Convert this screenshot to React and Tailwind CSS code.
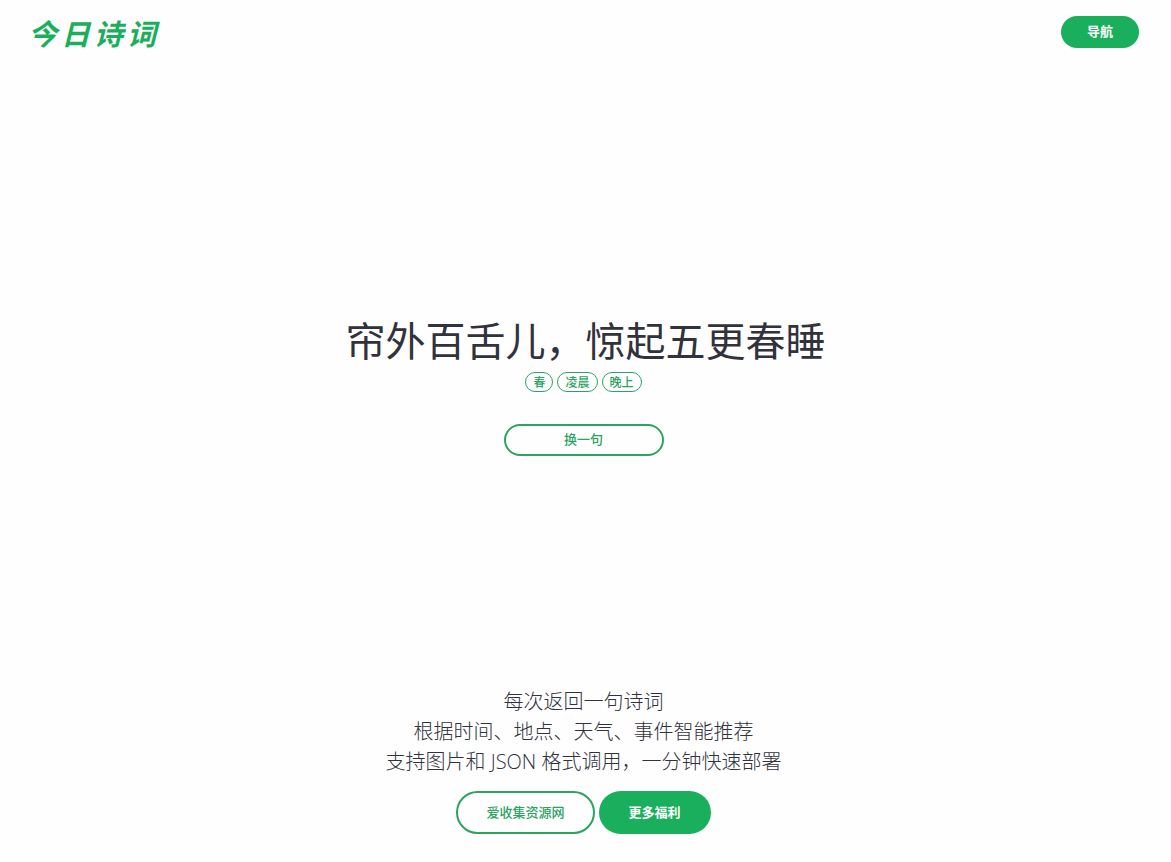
import { useState } from "react";

const POEMS = [
  { text: "帘外百舌儿，惊起五更春睡", tags: ["春", "凌晨", "晚上"] },
];

const FEATURES = [
  "每次返回一句诗词",
  "根据时间、地点、天气、事件智能推荐",
  "支持图片和 JSON 格式调用，一分钟快速部署",
];

export default function App() {
  const [index, setIndex] = useState(0);
  const poem = POEMS[index];

  return (
    <div className="flex min-h-screen flex-col bg-[#fefefe] font-['Open_Sans','Noto_Sans_CJK_SC',sans-serif] text-[#32323c]">
      <header className="flex h-16 items-center justify-between pr-8 pl-7">
        <Logo />
        <button className="h-8 rounded-full bg-[#1aaf5d] px-6.5 text-[13px] font-bold text-white hover:bg-[#17a055]">
          导航
        </button>
      </header>

      <main className="flex flex-1 flex-col items-center justify-center pt-5 text-center">
        <h1 className="mb-1.5 text-[40px] leading-[50px]">{poem.text}</h1>
        <div className="flex gap-1 pr-1">
          {poem.tags.map((tag) => (
            <Tag key={tag}>{tag}</Tag>
          ))}
        </div>
        <div className="mt-8 pr-1">
          <button
            onClick={() => setIndex((index + 1) % POEMS.length)}
            className="h-8 w-40 rounded-full border-2 border-[#2ba363] text-[13px] font-medium text-[#2ba363] hover:bg-[#1aaf5d] hover:text-white"
          >
            换一句
          </button>
        </div>
      </main>

      <footer className="flex flex-col items-center pr-1 pb-7 text-center">
        <div className="text-xl leading-[30px] font-light">
          {FEATURES.map((line) => (
            <p key={line}>{line}</p>
          ))}
        </div>
        <div className="mt-3.5 flex gap-1">
          <a
            href="#resources"
            className="flex h-[43px] items-center rounded-full border-2 border-[#2ba363] px-7 text-[13px] font-medium text-[#2ba363]"
          >
            爱收集资源网
          </a>
          <a
            href="#more"
            className="flex h-[43px] items-center rounded-full bg-[#1aaf5d] px-7.5 text-[13px] font-bold text-white"
          >
            更多福利
          </a>
        </div>
      </footer>
    </div>
  );
}

const Logo = () => (
  <a
    href="#home"
    className="flex gap-1 pt-0.5 text-[29px] leading-none font-bold text-[#1aaf5d] italic"
  >
    {["今", "日", "诗", "词"].map((char) => (
      <span key={char}>{char}</span>
    ))}
  </a>
);

const Tag = ({ children }) => (
  <span className="h-5 rounded-full border border-[#2ba363] px-[7px] text-xs leading-[19px] font-medium text-[#2ba363]">
    {children}
  </span>
);
